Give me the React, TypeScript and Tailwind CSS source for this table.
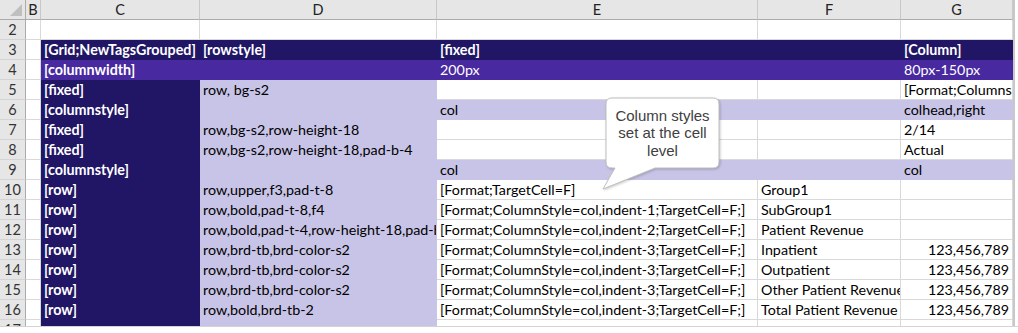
import React from "react";

type Fill = "d" | "m" | "l" | "w";
type Cell = { t?: string; f: Fill; b?: boolean; r?: boolean };

const fillClass: Record<Fill, string> = {
  d: "bg-[#211566] text-white border-transparent",
  m: "bg-[#48299F] text-white border-transparent",
  l: "bg-[#C8C4E7] text-black border-transparent",
  w: "bg-white text-black border-[#D9D9D9]",
};

const c = (f: Fill, t?: string, b?: boolean, r?: boolean): Cell => ({ f, t, b, r });

const fmt = (n: number) => `[Format;ColumnStyle=col,indent-${n};TargetCell=F;]`;

const rows: { n: number; cells: Cell[] }[] = [
  { n: 2, cells: [c("w"), c("w"), c("w"), c("w"), c("w"), c("w")] },
  {
    n: 3,
    cells: [
      c("w"),
      c("d", "[Grid;NewTagsGrouped]", true),
      c("d", "[rowstyle]", true),
      c("d", "[fixed]", true),
      c("d"),
      c("d", "[Column]", true),
    ],
  },
  {
    n: 4,
    cells: [c("w"), c("m", "[columnwidth]", true), c("m"), c("m", "200px"), c("m"), c("m", "80px-150px")],
  },
  {
    n: 5,
    cells: [c("w"), c("d", "[fixed]", true), c("l", "row, bg-s2"), c("w"), c("w"), c("w", "[Format;ColumnsStyle=colhead]")],
  },
  {
    n: 6,
    cells: [c("w"), c("d", "[columnstyle]", true), c("l"), c("l", "col"), c("l"), c("l", "colhead,right")],
  },
  {
    n: 7,
    cells: [c("w"), c("d", "[fixed]", true), c("l", "row,bg-s2,row-height-18"), c("w"), c("w"), c("w", "2/14")],
  },
  {
    n: 8,
    cells: [c("w"), c("d", "[fixed]", true), c("l", "row,bg-s2,row-height-18,pad-b-4"), c("w"), c("w"), c("w", "Actual")],
  },
  {
    n: 9,
    cells: [c("w"), c("d", "[columnstyle]", true), c("l"), c("l", "col"), c("l"), c("l", "col")],
  },
  {
    n: 10,
    cells: [c("w"), c("d", "[row]", true), c("l", "row,upper,f3,pad-t-8"), c("w", "[Format;TargetCell=F]"), c("w", "Group1"), c("w")],
  },
  {
    n: 11,
    cells: [c("w"), c("d", "[row]", true), c("l", "row,bold,pad-t-8,f4"), c("w", fmt(1)), c("w", "SubGroup1"), c("w")],
  },
  {
    n: 12,
    cells: [c("w"), c("d", "[row]", true), c("l", "row,bold,pad-t-4,row-height-18,pad-b-4"), c("w", fmt(2)), c("w", "Patient Revenue"), c("w")],
  },
  {
    n: 13,
    cells: [c("w"), c("d", "[row]", true), c("l", "row,brd-tb,brd-color-s2"), c("w", fmt(3)), c("w", "Inpatient"), c("w", "123,456,789", false, true)],
  },
  {
    n: 14,
    cells: [c("w"), c("d", "[row]", true), c("l", "row,brd-tb,brd-color-s2"), c("w", fmt(3)), c("w", "Outpatient"), c("w", "123,456,789", false, true)],
  },
  {
    n: 15,
    cells: [c("w"), c("d", "[row]", true), c("l", "row,brd-tb,brd-color-s2"), c("w", fmt(3)), c("w", "Other Patient Revenue"), c("w", "123,456,789", false, true)],
  },
  {
    n: 16,
    cells: [c("w"), c("d", "[row]", true), c("l", "row,bold,brd-tb-2"), c("w", fmt(3)), c("w", "Total Patient Revenue"), c("w", "123,456,789", false, true)],
  },
  { n: 17, cells: [c("w"), c("d"), c("l"), c("w"), c("w"), c("w")] },
];

const headers = ["B", "C", "D", "E", "F", "G"];

export default function App() {
  return (
    <div className="relative w-[1018px] h-[333px] bg-white overflow-hidden font-['Lato',sans-serif] text-[14.3px]">
      <div className="h-[327px] overflow-hidden border-b border-[#D4D4D4]">
        <div className="grid grid-cols-[26px_15px_159px_237px_321px_143px_112px_1fr] auto-rows-[20px]">
          {/* header row */}
          <div className="relative bg-[#E6E6E6] border-r border-b border-[#ABABAB]">
            <div className="absolute right-[3px] bottom-[3px] w-0 h-0 border-l-[12px] border-l-transparent border-b-[12px] border-b-[#BFBFBF]" />
          </div>
          {headers.map((h) => (
            <div
              key={h}
              className="bg-[#E6E6E6] border-r border-b border-r-[#C8C8C8] border-b-[#ABABAB] flex items-center justify-center text-[#222] text-[14.5px]"
            >
              {h}
            </div>
          ))}
          <div className="bg-white border-l-2 border-[#C8C8C8]" />
          {rows.map((row) => (
            <React.Fragment key={row.n}>
              <div className="bg-[#E6E6E6] border-r border-b border-r-[#ABABAB] border-b-[#D4D4D4] flex items-center justify-center text-[#333] text-[14.5px]">
                {row.n}
              </div>
              {row.cells.map((cell, i) => (
                <div
                  key={i}
                  className={`${fillClass[cell.f]} border-r border-b overflow-hidden whitespace-nowrap flex items-center px-[3px] leading-[20px] ${
                    cell.b ? "font-bold" : "font-normal"
                  } ${cell.r ? "justify-end" : "justify-start"}`}
                >
                  {cell.t}
                </div>
              ))}
              <div className="bg-white border-l-2 border-[#C8C8C8]" />
            </React.Fragment>
          ))}
        </div>
      </div>

      {/* callout */}
      <div className="absolute left-[600px] top-[95px] w-[125px] h-[100px]">
        <svg width="125" height="100" viewBox="0 0 125 100" className="absolute inset-0 drop-shadow-[1px_1px_1px_rgba(0,0,0,0.2)]">
          <path
            d="M12 3 H113 Q119 3 119 9 V67 Q119 73 113 73 H55 L3 94 L15 73 H12 Q6 73 6 67 V9 Q6 3 12 3 Z"
            fill="#ffffff"
            stroke="#BFBFBF"
            strokeWidth="1"
          />
        </svg>
        <div className="absolute left-[6px] top-[3px] w-[113px] h-[70px] flex flex-col items-center justify-center text-center font-['Liberation_Sans',Arial,sans-serif] text-[15px] leading-[17.5px] text-[#404040]">
          <span>Column styles</span>
          <span>set at the cell</span>
          <span>level</span>
        </div>
      </div>
    </div>
  );
}
